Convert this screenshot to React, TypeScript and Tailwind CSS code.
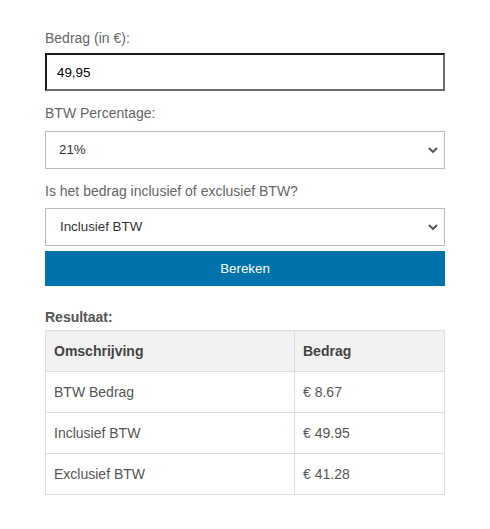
import { useState } from "react";

const rows = [
  { label: "BTW Bedrag", value: "€ 8.67" },
  { label: "Inclusief BTW", value: "€ 49.95" },
  { label: "Exclusief BTW", value: "€ 41.28" },
];

function Chevron() {
  return (
    <svg
      width="10"
      height="6"
      viewBox="0 0 10 6"
      className="pointer-events-none absolute right-[7px] top-1/2 -translate-y-1/2"
    >
      <path d="M1 1l4 4 4-4" fill="none" stroke="#555" strokeWidth="2" />
    </svg>
  );
}

export default function App() {
  const [amount, setAmount] = useState("49,95");

  return (
    <div className="min-h-[529px] bg-white font-['Liberation_Sans',Arial,sans-serif]">
      <div className="w-[400px] ml-[45px] pt-[30px]">
        <label className="block text-[14px] leading-4 text-[#666] mb-[7px]">
          Bedrag (in €):
        </label>
        <input
          value={amount}
          onChange={(e) => setAmount(e.target.value)}
          className="block w-full h-[38px] px-[10px] text-[13.33px] text-black border-2 border-t-[#1a1a1a] border-l-[#1a1a1a] border-r-[#6b6b6b] border-b-[#6b6b6b] outline-none"
        />

        <label className="block text-[14px] leading-4 text-[#666] mt-[14px] mb-[10px]">
          BTW Percentage:
        </label>
        <div className="relative">
          <select className="block w-full h-[38px] pl-[13px] appearance-none text-[13.33px] text-[#333] bg-white border border-[#bbb] outline-none">
            <option>21%</option>
            <option>9%</option>
            <option>0%</option>
          </select>
          <Chevron />
        </div>

        <label className="block text-[14px] leading-4 text-[#666] mt-[14px] mb-[9px]">
          Is het bedrag inclusief of exclusief BTW?
        </label>
        <div className="relative">
          <select className="block w-full h-[38px] pl-[14px] appearance-none text-[13.33px] text-[#333] bg-white border border-[#bbb] outline-none">
            <option>Inclusief BTW</option>
            <option>Exclusief BTW</option>
          </select>
          <Chevron />
        </div>

        <button className="block w-full h-[35px] mt-[5px] bg-[#0073aa] text-white text-[13.33px]">
          Bereken
        </button>

        <div className="mt-[23px] mb-[5px] text-[14px] leading-4 font-bold text-[#555]">
          Resultaat:
        </div>
        <table className="w-full border-collapse text-[14px] text-[#555]">
          <thead>
            <tr className="bg-[#f2f2f2]">
              <th className="w-[249px] h-[41px] border border-[#ddd] px-[8px] text-left font-bold text-[#444]">
                Omschrijving
              </th>
              <th className="h-[41px] border border-[#ddd] px-[8px] text-left font-bold text-[#444]">
                Bedrag
              </th>
            </tr>
          </thead>
          <tbody>
            {rows.map((row) => (
              <tr key={row.label}>
                <td className="h-[41px] border border-[#ddd] px-[8px]">{row.label}</td>
                <td className="h-[41px] border border-[#ddd] px-[8px]">{row.value}</td>
              </tr>
            ))}
          </tbody>
        </table>
      </div>
    </div>
  );
}
